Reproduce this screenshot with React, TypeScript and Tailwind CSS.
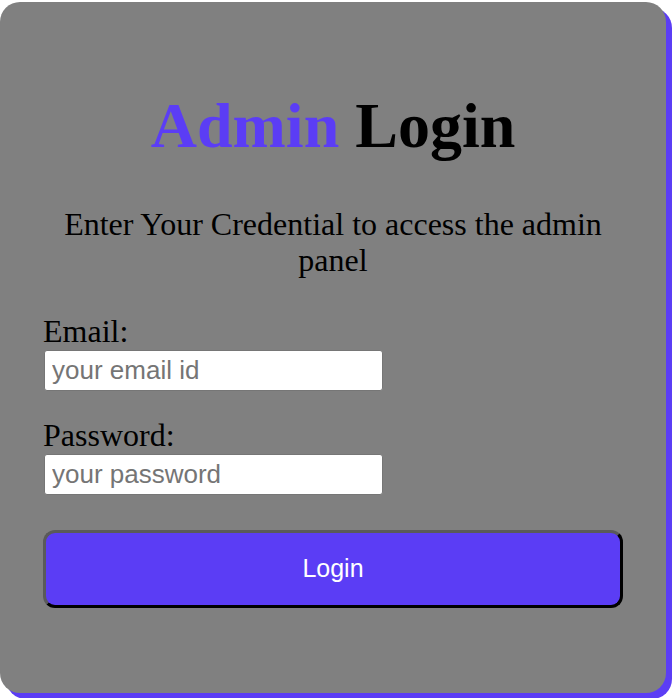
import React from "react";

const App: React.FC = () => {
  return (
    <div className="w-[672px] h-[698px] bg-white">
      <div className="pt-[2px]">
        <div className="w-[666px] h-[691px] rounded-[20px] bg-[#808080] shadow-[6px_6px_0_#5b3df5] px-[43px] pt-[88px] font-['Liberation_Serif',serif] text-black">
          <h1 className="text-center text-[64px] font-bold leading-[71px]">
            <span className="text-[#5b3df5]">Admin</span> Login
          </h1>
          <p className="mt-[46px] text-center text-[32px] leading-[35.5px]">
            Enter Your Credential to access the admin panel
          </p>
          <form className="mt-[35px]" onSubmit={(e) => e.preventDefault()}>
            <label className="block text-[32px] leading-[37px]">Email:</label>
            <input
              type="email"
              placeholder="your email id"
              className="block ml-[1px] w-[339px] h-[41px] rounded-[3px] border border-[#767676] bg-white px-[7px] text-[26px] font-['Liberation_Sans',sans-serif] placeholder:text-[#757575] outline-none"
            />
            <label className="block mt-[26px] text-[32px] leading-[37px]">Password:</label>
            <input
              type="password"
              placeholder="your password"
              className="block ml-[1px] w-[339px] h-[41px] rounded-[3px] border border-[#767676] bg-white px-[7px] text-[26px] font-['Liberation_Sans',sans-serif] placeholder:text-[#757575] outline-none"
            />
            <button
              type="submit"
              className="mt-[35px] w-[580px] h-[78px] rounded-[12px] border-[3px] border-t-[#5a5a5a] border-l-[#5a5a5a] border-b-black border-r-black bg-[#5b3df5] text-white text-[25px] font-['Liberation_Sans',sans-serif]"
            >
              Login
            </button>
          </form>
        </div>
      </div>
    </div>
  );
};

export default App;
